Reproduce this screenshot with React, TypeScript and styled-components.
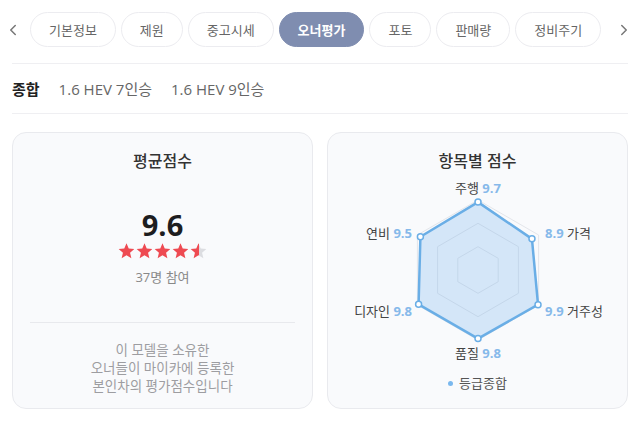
import styled, { createGlobalStyle } from 'styled-components';
import { ChevronLeft, ChevronRight } from 'lucide-react';

const GlobalStyle = createGlobalStyle`
  body {
    margin: 0;
    background: #fff;
    font-family: "Open Sans", "Noto Sans CJK KR", sans-serif;
    color: #333;
  }
`;

const Page = styled.div`
  width: 640px;
  padding: 0 12px;
  box-sizing: border-box;
`;

const Nav = styled.div`
  display: flex;
  align-items: center;
  padding-top: 12px;
  margin: 0 -12px;
`;

const NavArrow = styled.div<{ $side: 'left' | 'right' }>`
  display: flex;
  align-items: center;
  color: #777;
  width: 30px;
  box-sizing: border-box;
  justify-content: ${(p) => (p.$side === 'left' ? 'flex-start' : 'flex-end')};
  padding: ${(p) => (p.$side === 'left' ? '0 0 0 4px' : '0 7px 0 0')};
  margin-left: ${(p) => (p.$side === 'right' ? 'auto' : '0')};
`;

const Pills = styled.div`
  display: flex;
  gap: 5px;
`;

const Pill = styled.div<{ $active?: boolean }>`
  height: 35px;
  padding: 0 18px;
  display: flex;
  align-items: center;
  border-radius: 18px;
  font-size: 13px;
  box-sizing: border-box;
  white-space: nowrap;
  border: 1px solid ${(p) => (p.$active ? '#7f8db0' : '#ececf0')};
  background: ${(p) => (p.$active ? '#7f8db0' : '#fff')};
  color: ${(p) => (p.$active ? '#fff' : '#666')};
  font-weight: ${(p) => (p.$active ? 700 : 400)};
`;

const Divider = styled.div<{ $top?: number }>`
  height: 1px;
  background: #efeff2;
  margin-top: ${(p) => p.$top ?? 0}px;
`;

const SubTabs = styled.div`
  height: 49px;
  display: flex;
  align-items: center;
  gap: 19px;
`;

const SubTab = styled.span<{ $active?: boolean }>`
  font-size: 15px;
  line-height: 20px;
  color: ${(p) => (p.$active ? '#222' : '#666')};
  font-weight: ${(p) => (p.$active ? 700 : 400)};
`;

const Cards = styled.div`
  display: flex;
  gap: 14px;
  margin-top: 18px;
`;

const Card = styled.div`
  flex: 1;
  background: #f9fafc;
  border: 1px solid #e9eaee;
  border-radius: 14px;
  display: flex;
  flex-direction: column;
  align-items: center;
  padding: 17px 0 13px;
`;

const CardTitle = styled.div`
  font-size: 16px;
  line-height: 22px;
  font-weight: 500;
  color: #333;
`;

const BigScore = styled.div`
  margin-top: 36px;
  font-size: 29px;
  line-height: 34px;
  font-weight: 700;
  color: #1d1d1f;
`;

const Stars = styled.div`
  margin-top: 2px;
  display: flex;
  gap: 1px;
  height: 14px;
  align-items: center;
`;

const Voters = styled.div`
  margin-top: 10px;
  font-size: 13px;
  line-height: 18px;
  color: #888;
`;

const InnerLine = styled.div`
  align-self: stretch;
  height: 1px;
  background: #e8e9ed;
  margin: 36px 17px 0;
`;

const Note = styled.div`
  margin-top: 18px;
  font-size: 13.5px;
  line-height: 18px;
  color: #9d9da1;
  text-align: center;
`;

const Legend = styled.div`
  margin-top: 12px;
  display: flex;
  align-items: center;
  gap: 6px;
  font-size: 13px;
  line-height: 18px;
  color: #555;
`;

const LegendDot = styled.span`
  width: 5px;
  height: 5px;
  border-radius: 50%;
  background: #7ab8ee;
`;

const tabs = ['기본정보', '제원', '중고시세', '오너평가', '포토', '판매량', '정비주기'];

const Star = ({ fill, id }: { fill: number; id: string }) => (
  <svg width="17" height="16" viewBox="0 0 24 23">
    <defs>
      <linearGradient id={id} x1="0" x2="1" y1="0" y2="0">
        <stop offset={fill} stopColor="#ee4a52" />
        <stop offset={fill} stopColor="#dcdde1" />
      </linearGradient>
    </defs>
    <polygon
      points="12,0.5 15.2,8 23.3,8.6 17.1,13.9 19,21.8 12,17.6 5,21.8 6.9,13.9 0.7,8.6 8.8,8"
      fill={`url(#${id})`}
    />
  </svg>
);

const items = [
  { label: '주행', value: 9.7 },
  { label: '가격', value: 8.9 },
  { label: '거주성', value: 9.9 },
  { label: '품질', value: 9.8 },
  { label: '디자인', value: 9.8 },
  { label: '연비', value: 9.5 },
];

const CX = 150;
const CY = 98;
const R = 70;

const pt = (i: number, r: number) => {
  const a = ((-90 + i * 60) * Math.PI) / 180;
  return [CX + r * Math.cos(a), CY + r * Math.sin(a)];
};

const hex = (r: number) =>
  items.map((_, i) => pt(i, r).map((v) => v.toFixed(1)).join(',')).join(' ');

const labelPos: { x: number; y: number; anchor: 'start' | 'middle' | 'end'; numFirst: boolean }[] = [
  { x: 150, y: 16, anchor: 'middle', numFirst: false },
  { x: 217, y: 61, anchor: 'start', numFirst: true },
  { x: 217, y: 139, anchor: 'start', numFirst: true },
  { x: 150, y: 181, anchor: 'middle', numFirst: false },
  { x: 84, y: 139, anchor: 'end', numFirst: false },
  { x: 84, y: 61, anchor: 'end', numFirst: false },
];

const Radar = () => {
  const data = items.map((it, i) => pt(i, (it.value / 10) * R));
  return (
    <svg width="299" height="190" viewBox="0 0 299 190">
      {[R / 3, (2 * R) / 3, R].map((r) => (
        <polygon key={r} points={hex(r)} fill="none" stroke="#e3e5ea" strokeWidth="1" />
      ))}
      <polygon
        points={data.map((p) => p.join(',')).join(' ')}
        fill="rgba(110,175,235,0.26)"
        stroke="#6aaee6"
        strokeWidth="2.5"
        strokeLinejoin="round"
      />
      {data.map((p, i) => (
        <circle key={i} cx={p[0]} cy={p[1]} r="3" fill="#fff" stroke="#6aaee6" strokeWidth="1.5" />
      ))}
      {items.map((it, i) => {
        const l = labelPos[i];
        const num = (
          <tspan key="n" fill="#86b9ea" fontWeight="700">
            {it.value.toFixed(1)}
          </tspan>
        );
        const txt = (
          <tspan key="t" fill="#444">
            {it.label}
          </tspan>
        );
        return (
          <text
            key={it.label}
            x={l.x}
            y={l.y}
            textAnchor={l.anchor}
            dominantBaseline="central"
            fontSize="13"
            fontFamily='"Open Sans", "Noto Sans CJK KR", sans-serif'
          >
            {l.numFirst ? [num, ' ', txt] : [txt, ' ', num]}
          </text>
        );
      })}
    </svg>
  );
};

export default function App() {
  return (
    <>
      <GlobalStyle />
      <Page>
        <Nav>
          <NavArrow $side="left">
            <ChevronLeft size={18} strokeWidth={2} />
          </NavArrow>
          <Pills>
            {tabs.map((t) => (
              <Pill key={t} $active={t === '오너평가'}>
                {t}
              </Pill>
            ))}
          </Pills>
          <NavArrow $side="right">
            <ChevronRight size={18} strokeWidth={2} />
          </NavArrow>
        </Nav>
        <Divider $top={16} />
        <SubTabs>
          <SubTab $active>종합</SubTab>
          <SubTab>1.6 HEV 7인승</SubTab>
          <SubTab>1.6 HEV 9인승</SubTab>
        </SubTabs>
        <Divider />
        <Cards>
          <Card>
            <CardTitle>평균점수</CardTitle>
            <BigScore>9.6</BigScore>
            <Stars>
              {[1, 1, 1, 1, 0.55].map((f, i) => (
                <Star key={i} fill={f} id={`star-${i}`} />
              ))}
            </Stars>
            <Voters>37명 참여</Voters>
            <InnerLine />
            <Note>
              이 모델을 소유한
              <br />
              오너들이 마이카에 등록한
              <br />
              본인차의 평가점수입니다
            </Note>
          </Card>
          <Card>
            <CardTitle>항목별 점수</CardTitle>
            <Radar />
            <Legend>
              <LegendDot />
              등급종합
            </Legend>
          </Card>
        </Cards>
      </Page>
    </>
  );
}
